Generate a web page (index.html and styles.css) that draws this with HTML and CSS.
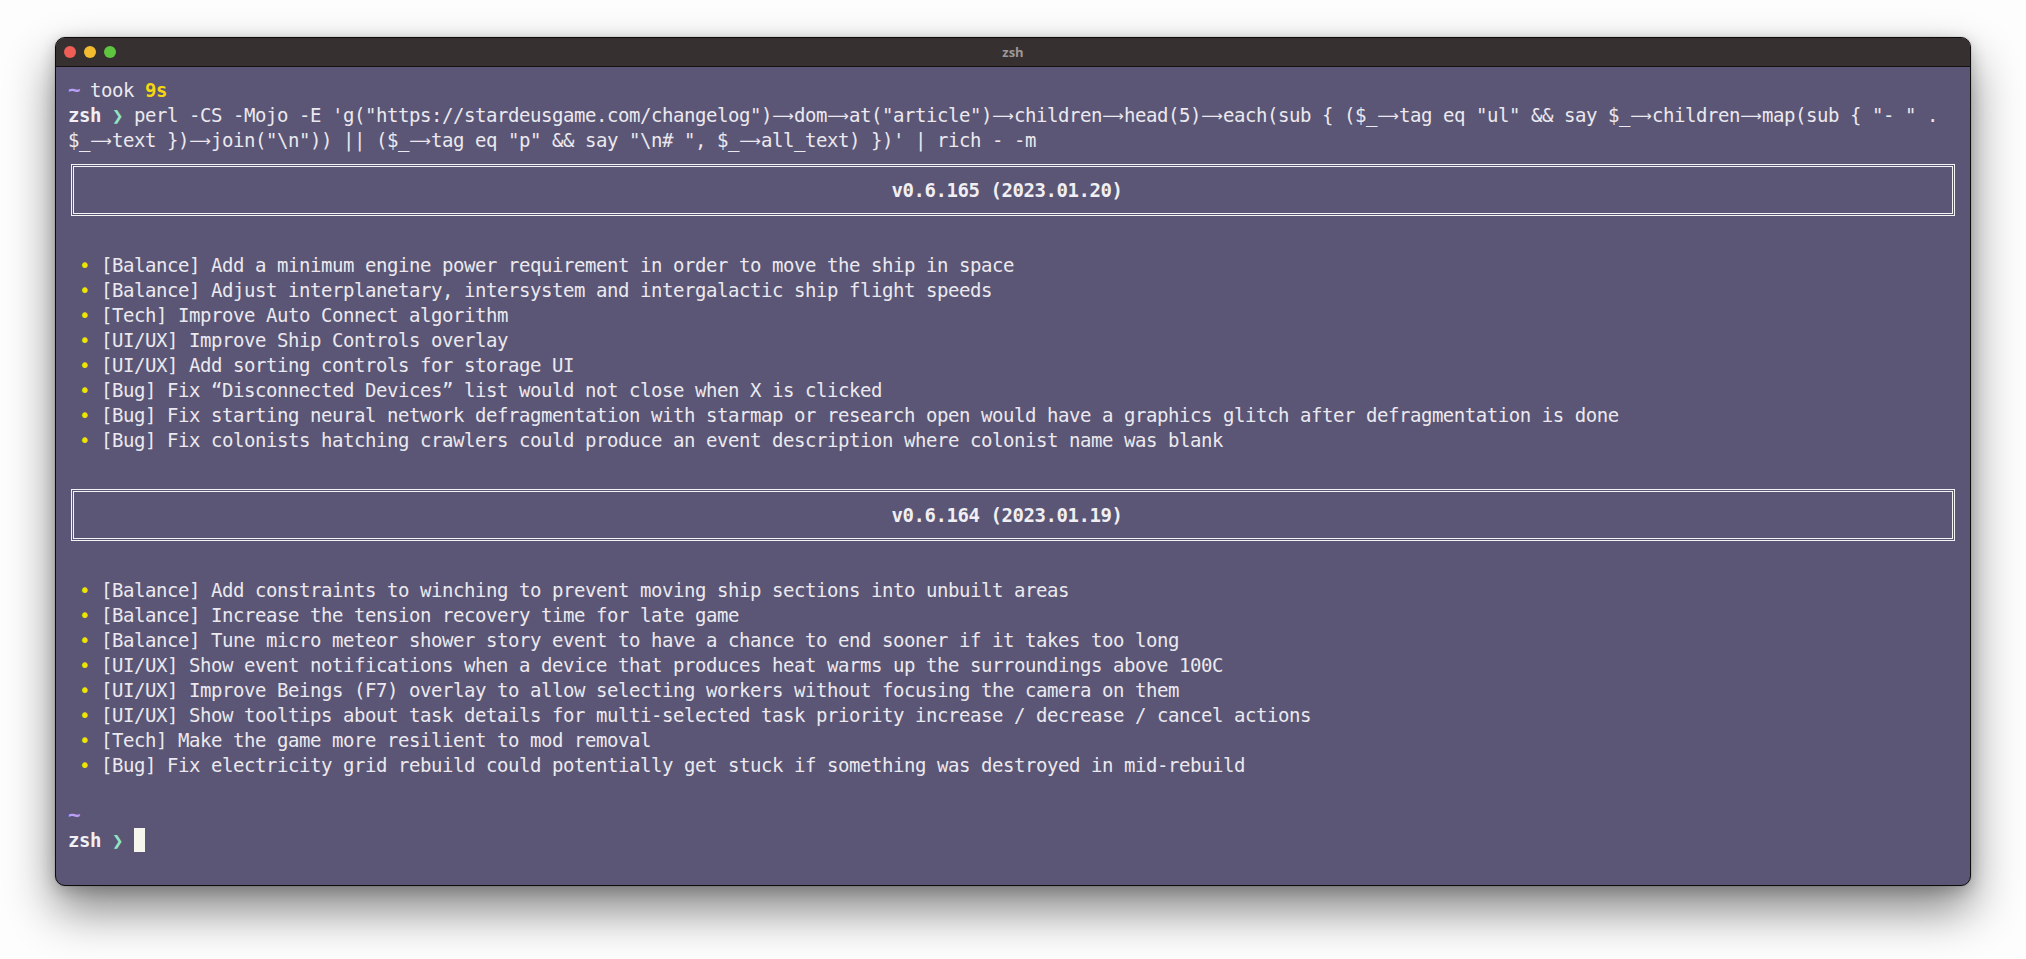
FILE: index.html
```html
<!DOCTYPE html>
<html lang="en">
<head>
<meta charset="utf-8">
<title>zsh</title>
<link rel="stylesheet" href="styles.css">
</head>
<body>
<div class="window">
  <div class="titlebar">
    <div class="lights">
      <span class="light red"></span>
      <span class="light yellow"></span>
      <span class="light green"></span>
    </div>
    <div class="title">zsh</div>
    <div></div>
  </div>
  <div class="term">
    <div class="line"><span class="tilde">~</span> took <span class="dur">9s</span></div>
    <div class="line"><b>zsh</b> <span class="chev">❯</span> perl -CS -Mojo -E 'g("https://stardeusgame.com/changelog")<span class="ar">⟶</span>dom<span class="ar">⟶</span>at("article")<span class="ar">⟶</span>children<span class="ar">⟶</span>head(5)<span class="ar">⟶</span>each(sub { ($_<span class="ar">⟶</span>tag eq "ul" &amp;&amp; say $_<span class="ar">⟶</span>children<span class="ar">⟶</span>map(sub { "- " .</div>
    <div class="line">$_<span class="ar">⟶</span>text })<span class="ar">⟶</span>join("\n")) || ($_<span class="ar">⟶</span>tag eq "p" &amp;&amp; say "\n# ", $_<span class="ar">⟶</span>all_text) })' | rich - -m</div>

    <div class="hbox">v0.6.165 (2023.01.20)</div>
    <div class="blank"></div>
    <ul class="list">
      <li> <span class="bul">•</span> [Balance] Add a minimum engine power requirement in order to move the ship in space</li>
      <li> <span class="bul">•</span> [Balance] Adjust interplanetary, intersystem and intergalactic ship flight speeds</li>
      <li> <span class="bul">•</span> [Tech] Improve Auto Connect algorithm</li>
      <li> <span class="bul">•</span> [UI/UX] Improve Ship Controls overlay</li>
      <li> <span class="bul">•</span> [UI/UX] Add sorting controls for storage UI</li>
      <li> <span class="bul">•</span> [Bug] Fix “Disconnected Devices” list would not close when X is clicked</li>
      <li> <span class="bul">•</span> [Bug] Fix starting neural network defragmentation with starmap or research open would have a graphics glitch after defragmentation is done</li>
      <li> <span class="bul">•</span> [Bug] Fix colonists hatching crawlers could produce an event description where colonist name was blank</li>
    </ul>
    <div class="blank"></div>

    <div class="hbox">v0.6.164 (2023.01.19)</div>
    <div class="blank"></div>
    <ul class="list">
      <li> <span class="bul">•</span> [Balance] Add constraints to winching to prevent moving ship sections into unbuilt areas</li>
      <li> <span class="bul">•</span> [Balance] Increase the tension recovery time for late game</li>
      <li> <span class="bul">•</span> [Balance] Tune micro meteor shower story event to have a chance to end sooner if it takes too long</li>
      <li> <span class="bul">•</span> [UI/UX] Show event notifications when a device that produces heat warms up the surroundings above 100C</li>
      <li> <span class="bul">•</span> [UI/UX] Improve Beings (F7) overlay to allow selecting workers without focusing the camera on them</li>
      <li> <span class="bul">•</span> [UI/UX] Show tooltips about task details for multi-selected task priority increase / decrease / cancel actions</li>
      <li> <span class="bul">•</span> [Tech] Make the game more resilient to mod removal</li>
      <li> <span class="bul">•</span> [Bug] Fix electricity grid rebuild could potentially get stuck if something was destroyed in mid-rebuild</li>
    </ul>
    <div class="blank"></div>

    <div class="line"><span class="tilde">~</span></div>
    <div class="line"><b>zsh</b> <span class="chev">❯</span> <span class="cursor"></span></div>
  </div>
</div>
</body>
</html>
```

FILE: styles.css
```css
html, body {
  margin: 0;
  background: #fdfdfd;
}

body {
  box-sizing: border-box;
  min-height: 959px;
  padding: 37px 0 0 55px;
}

.window {
  box-sizing: border-box;
  width: 1916px;
  height: 849px;
  border: 1px solid #0d0b0c;
  border-radius: 10px;
  overflow: hidden;
  background: #5b5675;
  display: flex;
  flex-direction: column;
  box-shadow: 0 0 0 1px rgba(0, 0, 0, 0.06), 0 24px 48px rgba(0, 0, 0, 0.48), 0 4px 16px rgba(0, 0, 0, 0.2);
}

.titlebar {
  height: 28px;
  flex: none;
  background: #363130;
  border-bottom: 1px solid #141112;
  display: grid;
  grid-template-columns: 1fr auto 1fr;
  align-items: center;
}

.lights {
  display: flex;
  gap: 8px;
  padding-left: 8px;
}

.light {
  width: 12px;
  height: 12px;
  border-radius: 50%;
}

.red { background: #ee5e57; }
.yellow { background: #f3bb2f; }
.green { background: #5fc43f; }

.title {
  font-family: "Open Sans", "DejaVu Sans", sans-serif;
  font-weight: 700;
  font-size: 13px;
  color: #9d9898;
}

.term {
  padding: 11px 10px 0 12px;
  font-family: "DejaVu Sans Mono", monospace;
  font-size: 19px;
  letter-spacing: -0.44px;
  line-height: 25px;
  color: #ebe9ef;
}

.line,
.list li,
.hbox {
  white-space: pre;
}

.line {
  height: 25px;
}

.term b {
  font-weight: 700;
  color: #f1eff3;
}

.tilde {
  display: inline-block;
  width: 11px;
  text-align: left;
  letter-spacing: 0;
  color: #bb9ff7;
  font-weight: 700;
  font-size: 21px;
  line-height: 1;
}

.dur {
  color: #f7d70f;
  font-weight: 700;
}

.chev {
  display: inline-block;
  width: 11px;
  color: #92e6c3;
  font-weight: 700;
  text-align: center;
  letter-spacing: 0;
}

.ar {
  display: inline-block;
  width: 22px;
  text-align: center;
  letter-spacing: 0;
  font-family: "DejaVu Sans", sans-serif;
  font-size: 15px;
  line-height: 1;
  vertical-align: 1px;
}

.hbox {
  box-sizing: border-box;
  height: 52px;
  margin: 11px 5px 12px 3px;
  border: 3px double #f3f3f3;
  display: flex;
  align-items: center;
  justify-content: center;
  padding-right: 12px;
  font-weight: 700;
  color: #f1eff3;
}

.blank {
  height: 25px;
}

.list {
  list-style: none;
  margin: 0;
  padding: 0;
}

.list li {
  height: 25px;
}

.bul {
  color: #f2e300;
}

.cursor {
  display: inline-block;
  width: 11px;
  height: 24px;
  vertical-align: top;
  background: #f6f5ee;
}
```
